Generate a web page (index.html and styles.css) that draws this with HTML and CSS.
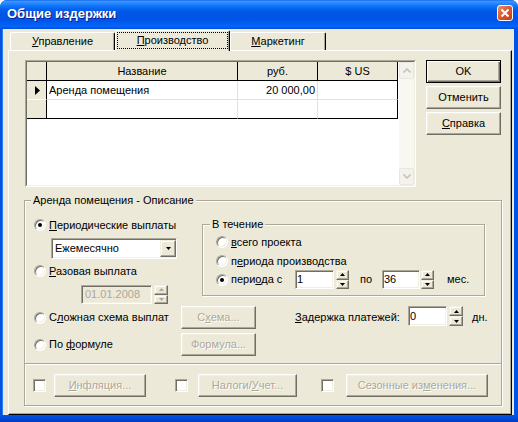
FILE: index.html
```
<!DOCTYPE html>
<html lang="ru">
<head>
<meta charset="utf-8">
<title>Общие издержки</title>
<link rel="stylesheet" href="styles.css">
</head>
<body>
<div class="window">
  <div class="titlebar">
    <span class="title">Общие издержки</span>
    <span class="close-btn"><svg width="14" height="14" viewBox="0 0 14 14"><path d="M3.5 3.5L10.5 10.5M10.5 3.5L3.5 10.5" stroke="#fff" stroke-width="2"/></svg></span>
  </div>
  <div class="frame">
    <div class="client">
      <div class="tabs">
        <div class="tab tab-1"><span><u>У</u>правление</span></div>
        <div class="tab tab-2"><span class="focus"><span><u>П</u>роизводство</span></span></div>
        <div class="tab tab-3"><span><u>М</u>аркетинг</span></div>
      </div>
      <div class="panel">
        <div class="panel-top">
          <div class="grid">
            <div class="grid-body">
              <div class="table">
                <div class="cell hd"></div>
                <div class="cell hd">Название</div>
                <div class="cell hd">руб.</div>
                <div class="cell hd">$ US</div>
                <div class="cell ind r1"><svg width="6" height="9" viewBox="0 0 6 9"><path d="M0 0L5 4.5L0 9Z" fill="#000"/></svg></div>
                <div class="cell r1">Аренда помещения</div>
                <div class="cell r1 num">20 000,00</div>
                <div class="cell r1 last"></div>
                <div class="cell ind r2"></div>
                <div class="cell r2"></div>
                <div class="cell r2"></div>
                <div class="cell r2 last"></div>
              </div>
              <div class="vscroll">
                <span class="sbtn"><svg width="8" height="5" viewBox="0 0 8 5"><path d="M0.5 4.5L4 1L7.5 4.5" stroke="#C7C4B6" stroke-width="1.6" fill="none"/></svg></span>
                <span class="sbtn"><svg width="8" height="5" viewBox="0 0 8 5"><path d="M0.5 0.5L4 4L7.5 0.5" stroke="#C7C4B6" stroke-width="1.6" fill="none"/></svg></span>
              </div>
            </div>
          </div>
          <div class="side-buttons">
            <div class="btn btn-default">OK</div>
            <div class="btn">Отменить</div>
            <div class="btn"><span><u>С</u>правка</span></div>
          </div>
        </div>

        <div class="group main-group">
          <div class="glabel">Аренда помещения - Описание</div>
          <div class="top-section">
            <div class="left-col">
              <div class="opt"><span class="radio checked"></span><span><u>П</u>ериодические выплаты</span></div>
              <div class="combo">
                <span class="combo-text">Ежемесячно</span>
                <span class="combo-btn"><svg width="5" height="3" viewBox="0 0 5 3"><path d="M0 0H5L2.5 3Z" fill="#000"/></svg></span>
              </div>
              <div class="opt opt-2"><span class="radio"></span><span><u>Р</u>азовая выплата</span></div>
              <div class="date-row">
                <span class="edit date">01.01.2008</span>
                <span class="spin spin-date disabled">
                  <span class="sp"><svg width="5" height="3" viewBox="0 0 5 3"><path d="M2.5 0L5 3H0Z"/></svg></span>
                  <span class="sp"><svg width="5" height="3" viewBox="0 0 5 3"><path d="M0 0H5L2.5 3Z"/></svg></span>
                </span>
              </div>
            </div>
            <div class="group period-group">
              <div class="glabel">В течение</div>
              <div class="opt p1"><span class="radio"></span><span><u>в</u>сего проекта</span></div>
              <div class="opt p2"><span class="radio"></span><span>п<u>е</u>риода производства</span></div>
              <div class="opt p3">
                <span class="radio checked"></span>
                <span class="p3-label">пери<u>о</u>да с</span>
                <span class="edit e-from">1</span>
                <span class="spin s-from">
                  <span class="sp"><svg width="5" height="3" viewBox="0 0 5 3"><path d="M2.5 0L5 3H0Z"/></svg></span>
                  <span class="sp"><svg width="5" height="3" viewBox="0 0 5 3"><path d="M0 0H5L2.5 3Z"/></svg></span>
                </span>
                <span class="po">по</span>
                <span class="edit e-to">36</span>
                <span class="spin s-to">
                  <span class="sp"><svg width="5" height="3" viewBox="0 0 5 3"><path d="M2.5 0L5 3H0Z"/></svg></span>
                  <span class="sp"><svg width="5" height="3" viewBox="0 0 5 3"><path d="M0 0H5L2.5 3Z"/></svg></span>
                </span>
                <span class="mes">мес.</span>
              </div>
            </div>
          </div>

          <div class="row row-3">
            <div class="opt"><span class="radio"></span><span>С<u>л</u>ожная схема выплат</span></div>
            <div class="btn btn-sm dis"><span>С<u>х</u>ема...</span></div>
            <span class="delay-label"><u>З</u>адержка платежей:</span>
            <span class="edit delay-edit">0</span>
            <span class="spin delay-spin">
              <span class="sp"><svg width="5" height="3" viewBox="0 0 5 3"><path d="M2.5 0L5 3H0Z"/></svg></span>
              <span class="sp"><svg width="5" height="3" viewBox="0 0 5 3"><path d="M0 0H5L2.5 3Z"/></svg></span>
            </span>
            <span class="dn">дн.</span>
          </div>
          <div class="row row-4">
            <div class="opt"><span class="radio"></span><span>По <u>ф</u>ормуле</span></div>
            <div class="btn btn-sm dis">Формула...</div>
          </div>

          <div class="sep"></div>

          <div class="row bottom-row">
            <span class="check"></span>
            <div class="btn dis b-infl"><span><u>И</u>нфляция...</span></div>
            <span class="check c2"></span>
            <div class="btn dis b-tax"><span>Налоги/<u>У</u>чет...</span></div>
            <span class="check c3"></span>
            <div class="btn dis b-season"><span>Сезонные из<u>м</u>енения...</span></div>
          </div>
        </div>
      </div>
    </div>
  </div>
</div>
</body>
</html>
```

FILE: styles.css
```
* { box-sizing: border-box; }
html, body { margin: 0; padding: 0; }
body {
  width: 518px;
  height: 422px;
  overflow: hidden;
  background: #fff;
  font-family: "Liberation Sans", Arial, sans-serif;
  font-size: 11px;
  color: #000;
}

/* ---------- window frame ---------- */
.window {
  width: 518px;
  height: 422px;
  display: flex;
  flex-direction: column;
  border-radius: 7px 7px 0 0;
  overflow: hidden;
  background: #0054E3;
}
.titlebar {
  height: 29px;
  flex: none;
  display: flex;
  align-items: flex-start;
  background: linear-gradient(to bottom,
    #0A5DE8 0px, #3D95FF 1px, #2A8AFF 3px, #0F76FA 6px, #0463EE 9px,
    #0058E6 12px, #0054E3 17px, #0057E9 21px, #005EF3 24px, #0366FA 26px,
    #0058E8 28px, #004AD6 29px);
}
.title {
  margin: 7px 0 0 7px;
  font-weight: bold;
  font-size: 13px;
  line-height: 14px;
  color: #fff;
  text-shadow: 1px 1px 0 #0A1E8C;
}
.close-btn {
  margin: 5px 5px 0 auto;
  width: 16px;
  height: 16px;
  border: 1px solid #fff;
  border-radius: 3px;
  background: linear-gradient(135deg, #EC8F70 0%, #DC5A34 45%, #C23D18 100%);
  display: flex;
  align-items: center;
  justify-content: center;
}
.frame {
  flex: 1;
  display: flex;
  padding: 0 4px 7px 3px;
  background: linear-gradient(to bottom, #0054E3 0, #0054E3 calc(100% - 6px), #0046D4 calc(100% - 3px), #003AB8 100%);
}
.client {
  flex: 1;
  display: flex;
  flex-direction: column;
  background: #ECE9D8;
  box-shadow: -1px 0 0 #2E7BF0;
}

/* ---------- tabs ---------- */
.tabs {
  height: 21px;
  flex: none;
  display: flex;
  align-items: flex-end;
  padding-left: 7px;
}
.tab {
  height: 18px;
  display: flex;
  align-items: center;
  justify-content: center;
  background: #ECE9D8;
  border-top: 1px solid #fff;
  border-left: 1px solid #fff;
  border-right: 1px solid #000;
  box-shadow: inset -1px 0 0 #ACA899;
  border-radius: 2px 2px 0 0;
  line-height: 13px;
}
.tab-1 { width: 105px; }
.tab-2 {
  width: 115px;
  height: 21px;
  margin-bottom: -1px;
  position: relative;
  z-index: 1;
  padding: 1px 1px 2px 1px;
  align-items: stretch;
}
.focus {
  flex: 1;
  border: 1px dotted #000;
  display: flex;
  align-items: center;
  justify-content: center;
}
.tab-3 { width: 96px; }

.panel {
  flex: 1;
  margin: 0 2px 0 5px;
  border-top: 1px solid #fff;
  border-left: 1px solid #fff;
  border-right: 1px solid #000;
  border-bottom: 1px solid #000;
  box-shadow: inset -1px -1px 0 #ACA899;
  padding: 9px 0 0 15px;
}

/* ---------- grid ---------- */
.panel-top { display: flex; }
.grid {
  width: 391px;
  height: 127px;
  margin-left: 1px;
  border: 1px solid;
  border-color: #ACA899 #fff #fff #ACA899;
}
.grid-body {
  height: 100%;
  display: flex;
  background: #fff;
  border: 1px solid;
  border-color: #716F64 #F1EFE2 #F1EFE2 #716F64;
}
.table {
  display: grid;
  grid-template-columns: 20px 191px 80px 80px;
  grid-auto-rows: 19px;
  align-self: flex-start;
}
.cell {
  border-right: 1px solid #E4E2D8;
  border-bottom: 1px solid #E4E2D8;
  line-height: 18px;
  padding: 0 2px;
  white-space: nowrap;
  overflow: hidden;
}
.hd {
  background: #ECE9D8;
  border-color: #000;
  text-align: center;
}
.ind {
  background: #ECE9D8;
  border-right-color: #000;
  border-bottom-color: #fff;
  display: flex;
  align-items: center;
  padding-left: 8px;
}
.last { border-right-color: #000; }
.r2 { border-bottom-color: #000; }
.num { text-align: right; }

.vscroll {
  margin-left: auto;
  width: 15px;
  background: #F8F7F2;
  display: flex;
  flex-direction: column;
  justify-content: space-between;
}
.sbtn {
  height: 17px;
  border: 1px solid #E9E7DD;
  border-radius: 2px;
  background: #F3F2EC;
  display: flex;
  align-items: center;
  justify-content: center;
}

/* ---------- buttons ---------- */
.side-buttons {
  margin-left: 10px;
  display: flex;
  flex-direction: column;
  gap: 3px;
}
.btn {
  width: 75px;
  height: 23px;
  display: flex;
  align-items: center;
  justify-content: center;
  background: #ECE9D8;
  border: 1px solid;
  border-color: #fff #716F64 #716F64 #fff;
  box-shadow: inset -1px -1px 0 #ACA899, inset 1px 1px 0 #F1EFE2;
  line-height: 13px;
  white-space: nowrap;
}
.btn-default {
  border-color: #000;
  box-shadow: inset 1px 1px 0 #fff, inset -1px -1px 0 #716F64, inset -2px -2px 0 #ACA899;
}
.dis {
  color: #ACA899;
  text-shadow: 1px 1px 0 #fff;
}

/* ---------- group boxes ---------- */
.group {
  border: 1px solid #ACA899;
  box-shadow: inset 1px 1px 0 #fff, 1px 1px 0 #fff;
  display: flex;
  flex-direction: column;
}
.glabel {
  align-self: flex-start;
  background: #ECE9D8;
  padding: 0 2px;
  line-height: 13px;
  margin: -7px 0 0 6px;
  white-space: nowrap;
}
.main-group {
  width: 478px;
  margin-top: 13px;
  padding-bottom: 8px;
}
.top-section {
  display: flex;
  margin-top: 11px;
}
.left-col {
  width: 177px;
  padding-left: 9px;
  display: flex;
  flex-direction: column;
  align-items: flex-start;
}

/* ---------- radios, checks, fields ---------- */
.opt {
  display: flex;
  align-items: center;
  height: 14px;
  line-height: 13px;
  white-space: nowrap;
}
.radio {
  width: 12px;
  height: 12px;
  flex: none;
  border-radius: 50%;
  border: 1px solid;
  border-color: #ACA899 #fff #fff #ACA899;
  background: #fff;
  box-shadow: inset 1px 1px 0 #716F64, inset -1px -1px 0 #F1EFE2;
  margin-right: 3px;
  display: flex;
  align-items: center;
  justify-content: center;
}
.radio.checked::after {
  content: "";
  width: 4px;
  height: 4px;
  border-radius: 50%;
  background: #000;
}
.check {
  width: 13px;
  height: 13px;
  flex: none;
  border: 1px solid;
  border-color: #ACA899 #fff #fff #ACA899;
  background: #fff;
  box-shadow: inset 1px 1px 0 #716F64, inset -1px -1px 0 #F1EFE2;
}
.combo {
  margin: 6px 0 0 17px;
  width: 126px;
  height: 21px;
  display: flex;
  align-items: center;
  padding-left: 3px;
  background: #fff;
  border: 1px solid;
  border-color: #ACA899 #fff #fff #ACA899;
  box-shadow: inset 1px 1px 0 #716F64, inset -1px -1px 0 #F1EFE2;
}
.combo-text { line-height: 13px; }
.combo-btn {
  margin-left: auto;
  width: 16px;
  height: 17px;
  display: flex;
  align-items: center;
  justify-content: center;
  background: #ECE9D8;
  border: 1px solid;
  border-color: #F1EFE2 #716F64 #716F64 #F1EFE2;
  box-shadow: inset -1px -1px 0 #ACA899, inset 1px 1px 0 #fff;
}
.opt-2 { margin-top: 5px; }
.date-row {
  display: flex;
  margin: 7px 0 0 47px;
  height: 19px;
}
.edit {
  height: 19px;
  display: flex;
  align-items: center;
  padding-left: 2px;
  line-height: 13px;
  background: #fff;
  border: 1px solid;
  border-color: #ACA899 #fff #fff #ACA899;
  box-shadow: inset 1px 1px 0 #716F64, inset -1px -1px 0 #F1EFE2;
}
.date {
  width: 71px;
  background: #ECE9D8;
  color: #ACA899;
  padding-left: 3px;
}
.spin {
  width: 13px;
  height: 19px;
  display: flex;
  flex-direction: column;
  flex: none;
}
.sp {
  flex: 1;
  display: flex;
  align-items: center;
  justify-content: center;
  background: #ECE9D8;
  border: 1px solid;
  border-color: #F1EFE2 #716F64 #716F64 #F1EFE2;
  box-shadow: inset -1px -1px 0 #ACA899, inset 1px 1px 0 #fff;
}
.sp svg { fill: #000; }
.spin.disabled .sp svg { fill: #ACA899; }
.spin-date { margin-left: 2px; width: 14px; }

/* ---------- period group ---------- */
.period-group {
  width: 283px;
  height: 72px;
  margin-top: 6px;
}
.period-group .glabel { margin-left: 7px; }
.period-group .opt { margin-left: 13px; }
.p1 { margin-top: 4px; }
.p2 { margin-top: 5px; }
.p3 { margin-top: 2px; height: 19px; }
.p3-label { width: 64px; }
.e-from { width: 39px; padding-left: 1px; }
.s-from { margin-left: 2px; }
.po { margin-left: 11px; width: 22px; }
.e-to { width: 38px; padding-left: 1px; }
.s-to { margin-left: 1px; }
.mes { margin-left: 13px; }

/* ---------- lower rows ---------- */
.row {
  display: flex;
  align-items: center;
  height: 23px;
  padding-left: 9px;
  white-space: nowrap;
}
.row-3 { margin-top: 2px; }
.row-4 { margin-top: 4px; }
.row .opt { width: 147px; }
.btn-sm { width: 75px; }
.delay-label { margin-left: 39px; width: 113px; line-height: 13px; }
.delay-edit { width: 39px; height: 20px; align-self: flex-start; padding-left: 1px; }
.delay-spin { margin-left: 2px; width: 14px; height: 20px; align-self: flex-start; }
.dn { margin-left: 9px; line-height: 13px; }

.sep {
  margin-top: 7px;
  border-top: 1px solid #ACA899;
  border-bottom: 1px solid #fff;
}
.bottom-row {
  margin-top: 9px;
  padding-left: 8px;
}
.b-infl { margin-left: 8px; width: 92px; }
.c2 { margin-left: 29px; }
.b-tax { margin-left: 10px; width: 99px; }
.c3 { margin-left: 24px; }
.b-season { margin-left: 12px; width: 142px; }
```
